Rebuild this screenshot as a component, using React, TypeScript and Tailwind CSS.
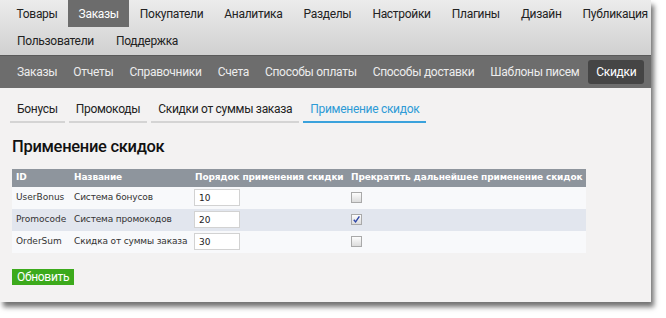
const MAIN_ROW_1 = ["Товары", "Заказы", "Покупатели", "Аналитика", "Разделы", "Настройки", "Плагины", "Дизайн", "Публикация"];
const MAIN_ROW_2 = ["Пользователи", "Поддержка"];
const SUB_MENU = ["Заказы", "Отчеты", "Справочники", "Счета", "Способы оплаты", "Способы доставки", "Шаблоны писем", "Скидки"];
const TABS = ["Бонусы", "Промокоды", "Скидки от суммы заказа", "Применение скидок"];

const ROWS = [
  { id: "UserBonus", name: "Система бонусов", order: "10", stop: false },
  { id: "Promocode", name: "Система промокодов", order: "20", stop: true },
  { id: "OrderSum", name: "Скидка от суммы заказа", order: "30", stop: false },
];

const sans = "font-['Roboto',sans-serif] tracking-[-0.3px]";
const tableFont = "font-['DejaVu_Sans',Verdana,sans-serif]";

function Checkbox({ checked }: { checked: boolean }) {
  return (
    <span className="grid h-[11px] w-[11px] place-items-center border border-[#a9a9a9] bg-gradient-to-b from-[#fdfdfd] to-[#dcdcdc]">
      {checked ? (
        <svg viewBox="0 0 10 10" className="h-[9px] w-[9px]">
          <path d="M2 5.2 L4 7.6 L8.2 1.6" fill="none" stroke="#2e46a8" strokeWidth="1.6" />
        </svg>
      ) : null}
    </span>
  );
}

export default function App() {
  return (
    <div className="h-[318px] w-[666px] bg-white">
      <div className="h-[302px] w-[651px] overflow-hidden bg-[#f3f2f2] shadow-[3px_5px_5px_rgba(0,0,0,0.55)]">
        {/* Главное меню */}
        <div className={`bg-gradient-to-b from-[#ececec] to-[#d0d0d0] text-[12px] text-[#222] ${sans}`}>
          <div className="flex h-[27px] pl-[6px] whitespace-nowrap">
            {MAIN_ROW_1.map((item) => (
              <span
                key={item}
                className={
                  item === "Заказы"
                    ? "flex items-center bg-[#6c6c6c] px-[10.5px] text-white"
                    : "flex items-center px-[10.5px]"
                }
              >
                {item}
              </span>
            ))}
          </div>
          <div className="flex h-[28px] pl-[6px]">
            {MAIN_ROW_2.map((item) => (
              <span key={item} className="flex items-center px-[11px]">
                {item}
              </span>
            ))}
          </div>
        </div>

        {/* Подменю раздела */}
        <div className={`flex h-[33px] items-center whitespace-nowrap border-t border-[#5a5a5a] bg-[#6d6d6d] pl-[9px] text-[12px] text-[#ececec] ${sans}`}>
          {SUB_MENU.map((item) => (
            <span
              key={item}
              className={
                item === "Скидки"
                  ? "ml-[1px] rounded-[3px] bg-[#454545] px-[8px] py-[3px] text-white"
                  : "px-[8px]"
              }
            >
              {item}
            </span>
          ))}
        </div>

        <div className="px-[12px]">
          {/* Вкладки */}
          <div className={`-ml-[2px] mt-[12px] flex gap-[4px] text-[12px] ${sans}`}>
            {TABS.map((tab, i) => (
              <span
                key={tab}
                className={
                  i === TABS.length - 1
                    ? "border-b-2 border-[#3aa2dc] px-[7px] pb-[3px] text-[#2e9bd6]"
                    : "border-b-2 border-[#d4d4d4] px-[7px] pb-[3px] text-[#222]"
                }
              >
                {tab}
              </span>
            ))}
          </div>

          <h1 className={`mt-[12px] text-[16.5px] font-medium text-[#111] ${sans}`}>Применение скидок</h1>

          {/* Таблица порядка применения */}
          <div className={`mt-[9px] w-[574px] text-[9px] ${tableFont}`}>
            <div className="grid h-[18px] grid-cols-[58px_121px_156px_1fr] items-center whitespace-nowrap bg-[#8e959d] font-bold tracking-[-0.15px] text-white">
              <span className="pl-[4px]">ID</span>
              <span className="pl-[4px]">Название</span>
              <span className="pl-[4px]">Порядок применения скидки</span>
              <span className="pl-[4px]">Прекратить дальнейшее применение скидок</span>
            </div>
            {ROWS.map((row, i) => (
              <div
                key={row.id}
                className={`grid h-[22px] grid-cols-[58px_121px_156px_1fr] items-center whitespace-nowrap text-[#333] ${
                  i === 1 ? "bg-[#e2e6ee]" : "bg-[#f8f9fb]"
                }`}
              >
                <span className="pl-[4px]">{row.id}</span>
                <span className="pl-[4px] tracking-[-0.15px]">{row.name}</span>
                <span className="pl-[3px]">
                  <span className="flex h-[17px] w-[46px] items-center border border-[#d2d2d2] bg-white pl-[4px] pt-[2px] text-[#222]">
                    {row.order}
                  </span>
                </span>
                <span className="flex pl-[4px]">
                  <Checkbox checked={row.stop} />
                </span>
              </div>
            ))}
          </div>

          <button
            className={`mt-[16px] flex h-[16px] items-center bg-[#3caa1c] px-[5px] text-[12px] text-white ${sans}`}
          >
            Обновить
          </button>
        </div>
      </div>
    </div>
  );
}
